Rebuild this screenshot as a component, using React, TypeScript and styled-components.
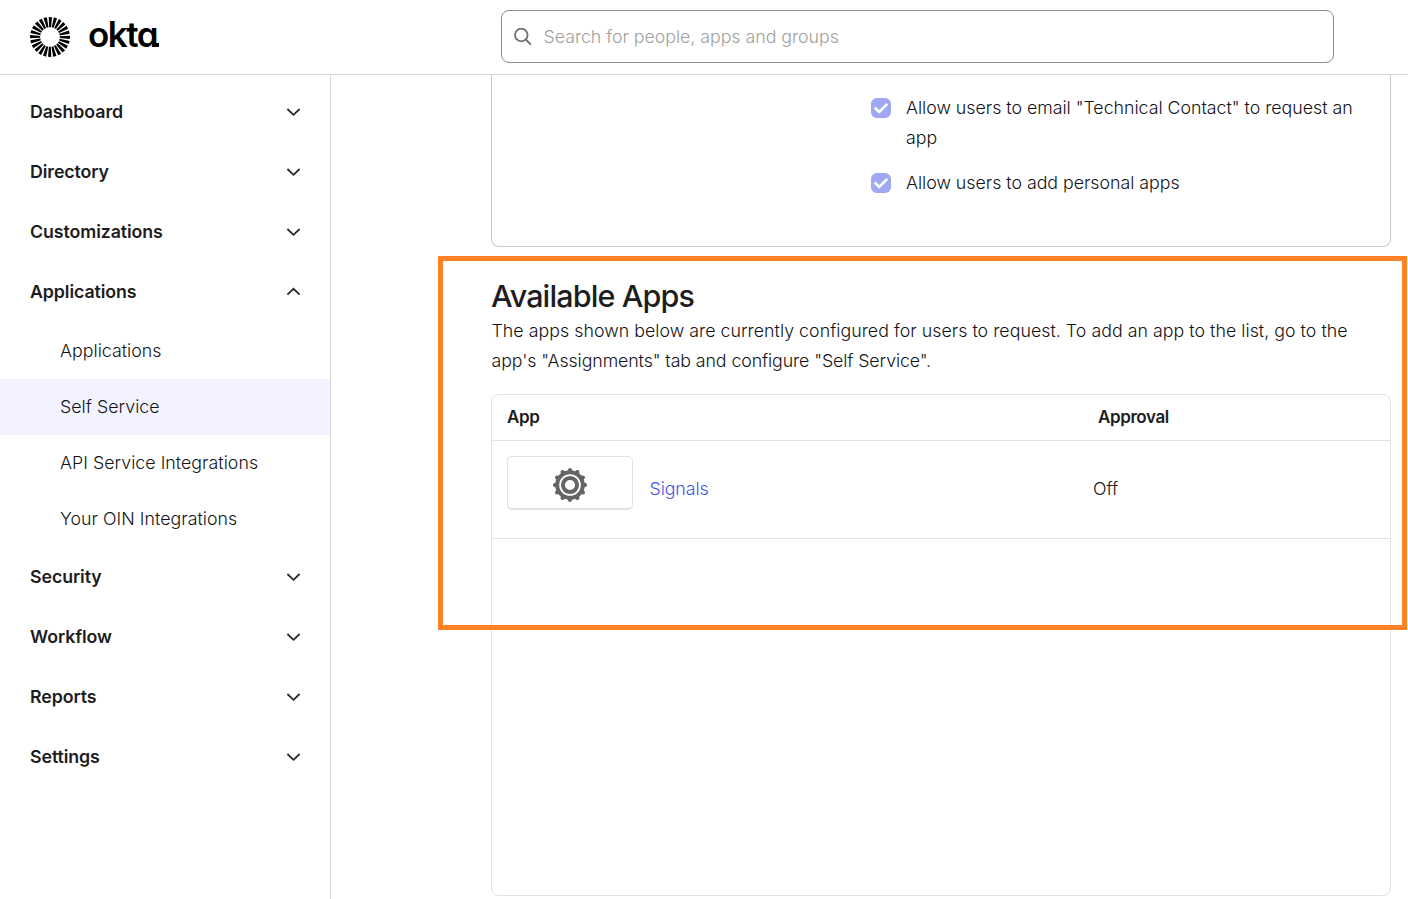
import React from "react";
import styled, { createGlobalStyle } from "styled-components";

const GlobalStyle = createGlobalStyle`
  * { box-sizing: border-box; }
  body {
    margin: 0;
    height: 899px;
    overflow: hidden;
    background: #fff;
    color: #141418;
    font: 350 17.8px/30px Inter, sans-serif;
    letter-spacing: -0.02px;
  }
  h1, p { margin: 0; }
`;

const Page = styled.div`
  position: relative;
  display: flex;
  flex-direction: column;
  height: 899px;
  overflow: hidden;
`;

const Header = styled.header`
  display: flex;
  align-items: center;
  flex: 0 0 75px;
  padding: 0 74px 1px 30px;
  border-bottom: 1px solid #d7d7dc;
`;

const Brand = styled.div`
  display: flex;
  align-items: center;
  gap: 18px;
  width: 471px;
`;

const Wordmark = styled.span`
  display: flex;
  align-items: baseline;
  font-size: 35px;
  font-weight: 590;
  line-height: 40px;
  letter-spacing: -1.5px;
  color: #000;
  font-feature-settings: "cv11";
  padding-bottom: 5px;

  &::after {
    content: "";
    width: 5px;
    height: 4px;
    margin-left: -3px;
    border-bottom-left-radius: 3px;
    background: #000;
  }
`;

const SearchBox = styled.label`
  display: flex;
  align-items: center;
  flex: 1;
  height: 53px;
  gap: 12px;
  padding: 0 11.5px;
  border: 1px solid #8c8c8f;
  border-radius: 8px;
  color: #a0a0a0;
  letter-spacing: -0.03px;
`;

const Body = styled.div`
  display: flex;
  flex: 1;
  min-height: 0;
`;

const Sidebar = styled.nav`
  width: 331px;
  padding-top: 7px;
  border-right: 1px solid #d7d7dc;
`;

const NavItem = styled.div`
  display: flex;
  align-items: center;
  justify-content: space-between;
  height: 60px;
  padding: 0 29px 0 30px;
  color: #1d1d21;
  font-weight: 590;
  letter-spacing: -0.09px;
`;

const SubNav = styled.div`
  padding-top: 1px;
`;

const SubItem = styled.div<{ $active?: boolean }>`
  display: flex;
  align-items: center;
  height: 56px;
  padding: 0 60px;
  letter-spacing: 0.03px;
  background: ${(p) => (p.$active ? "#f2f3ff" : "transparent")};
`;

const Main = styled.main`
  width: 900px;
  margin-left: 160px;
`;

const SettingsCard = styled.section`
  display: flex;
  flex-direction: column;
  gap: 15px;
  height: 172px;
  padding: 18px 20px 0 379px;
  border: 1px solid #c8c8cd;
  border-top: 0;
  border-radius: 0 0 8px 8px;
`;

const CheckRow = styled.div`
  display: flex;
  gap: 15px;
`;

const CheckMark = styled.span`
  display: flex;
  flex: 0 0 20px;
  height: 20px;
  margin-top: 5px;
  border-radius: 6px;
  background: #9fa8f2;
`;

const Title = styled.h1`
  margin-top: 29px;
  padding-bottom: 1px;
  color: #1d1d21;
  font-size: 30.5px;
  font-weight: 550;
  line-height: 39px;
  letter-spacing: -0.87px;
`;

const Line = styled.span<{ $spacing: number }>`
  display: block;
  padding-left: 0.5px;
  white-space: nowrap;
  letter-spacing: ${(p) => p.$spacing}px;
`;

const AppTable = styled.section`
  height: 502px;
  margin-top: 18px;
  border: 1px solid #e1e1e4;
  border-radius: 8px;
`;

const TableHead = styled.div`
  display: grid;
  grid-template-columns: 591px 1fr;
  height: 46px;
  padding: 7px 15px;
  border-bottom: 1px solid #e1e1e4;
  color: #1d1d21;
  font-size: 17px;
  font-weight: 600;
  letter-spacing: -0.4px;
`;

const TableRow = styled.div`
  display: grid;
  grid-template-columns: 126px 460px 1fr;
  height: 98px;
  padding: 15px;
  border-bottom: 1px solid #e1e1e4;
`;

const AppLogo = styled.div`
  display: flex;
  align-items: center;
  justify-content: center;
  height: 54px;
  padding-top: 5px;
  border: 1px solid #e1e1e4;
  border-bottom-width: 2px;
  border-radius: 5px;
`;

const AppLink = styled.a`
  padding: 18px 0 0 16.5px;
  color: #4058e0;
  letter-spacing: -0.08px;
`;

const Approval = styled.span`
  padding-top: 18px;
`;

const Highlight = styled.div`
  position: absolute;
  left: 438px;
  top: 256px;
  width: 969px;
  height: 374px;
  border: 5px solid #ff8126;
  pointer-events: none;
`;

const Sunburst = () => (
  <svg width="40" height="40" viewBox="-20 -20 40 40">
    {Array.from({ length: 24 }, (_, i) => (
      <path key={i} d="M-0.8 -9.8 L-1.3 -20 L2 -19.8 L1.1 -9.8Z" transform={`rotate(${i * 15})`} />
    ))}
  </svg>
);

const Chevron = ({ up }: { up?: boolean }) => (
  <svg width="15" height="10" viewBox="0 0 15 10" fill="none" stroke="#2a2a2e" strokeWidth="1.8">
    <path d={up ? "M1.4 7.6 7.5 1.8l6.1 5.8" : "M1.4 2l6.1 5.8 6.1-5.8"} />
  </svg>
);

const SearchIcon = () => (
  <svg width="18" height="18" viewBox="0 0 18 18" fill="none" stroke="#6e6e70" strokeWidth="1.8">
    <circle cx="7.3" cy="7" r="6.3" />
    <path d="M11.8 11.5l5.1 5.1" />
  </svg>
);

const Gear = () => (
  <svg width="36" height="36" viewBox="-18 -18 36 36" fill="#656565">
    {Array.from({ length: 12 }, (_, i) => (
      <path key={i} d="M-3.1 -13 L-1.9 -15 V-15.8 Q0 -18.4 1.9 -15.8 V-15 L3.1 -13Z" transform={`rotate(${i * 30})`} />
    ))}
    <circle r="12.8" fill="none" stroke="#656565" strokeWidth="4" />
    <circle r="7.1" fill="none" stroke="#656565" strokeWidth="4" />
  </svg>
);

const Check = () => (
  <CheckMark>
    <svg width="20" height="20" viewBox="0 0 20 20" fill="none" stroke="#fff" strokeWidth="2.6">
      <path d="M3.6 9.5l4.6 4.5 8.1-8.2" />
    </svg>
  </CheckMark>
);

const Item = ({ label, open }: { label: string; open?: boolean }) => (
  <NavItem>
    {label}
    <Chevron up={open} />
  </NavItem>
);

export default function App() {
  return (
    <Page>
      <GlobalStyle />
      <Header>
        <Brand>
          <Sunburst />
          <Wordmark>okta</Wordmark>
        </Brand>
        <SearchBox>
          <SearchIcon />
          Search for people, apps and groups
        </SearchBox>
      </Header>
      <Body>
        <Sidebar>
          <Item label="Dashboard" />
          <Item label="Directory" />
          <Item label="Customizations" />
          <Item label="Applications" open />
          <SubNav>
            <SubItem>Applications</SubItem>
            <SubItem $active>Self Service</SubItem>
            <SubItem>API Service Integrations</SubItem>
            <SubItem>Your OIN Integrations</SubItem>
          </SubNav>
          <Item label="Security" />
          <Item label="Workflow" />
          <Item label="Reports" />
          <Item label="Settings" />
        </Sidebar>
        <Main>
          <SettingsCard>
            <CheckRow>
              <Check />
              <p>Allow users to email "Technical Contact" to request an app</p>
            </CheckRow>
            <CheckRow>
              <Check />
              <p>Allow users to add personal apps</p>
            </CheckRow>
          </SettingsCard>
          <Title>Available Apps</Title>
          <p>
            <Line $spacing={0.03}>
              The apps shown below are currently configured for users to request. To add an app to the list, go to the
            </Line>
            <Line $spacing={-0.1}>app's "Assignments" tab and configure "Self Service".</Line>
          </p>
          <AppTable>
            <TableHead>
              <span>App</span>
              <span>Approval</span>
            </TableHead>
            <TableRow>
              <AppLogo>
                <Gear />
              </AppLogo>
              <AppLink>Signals</AppLink>
              <Approval>Off</Approval>
            </TableRow>
          </AppTable>
        </Main>
      </Body>
      <Highlight />
    </Page>
  );
}
